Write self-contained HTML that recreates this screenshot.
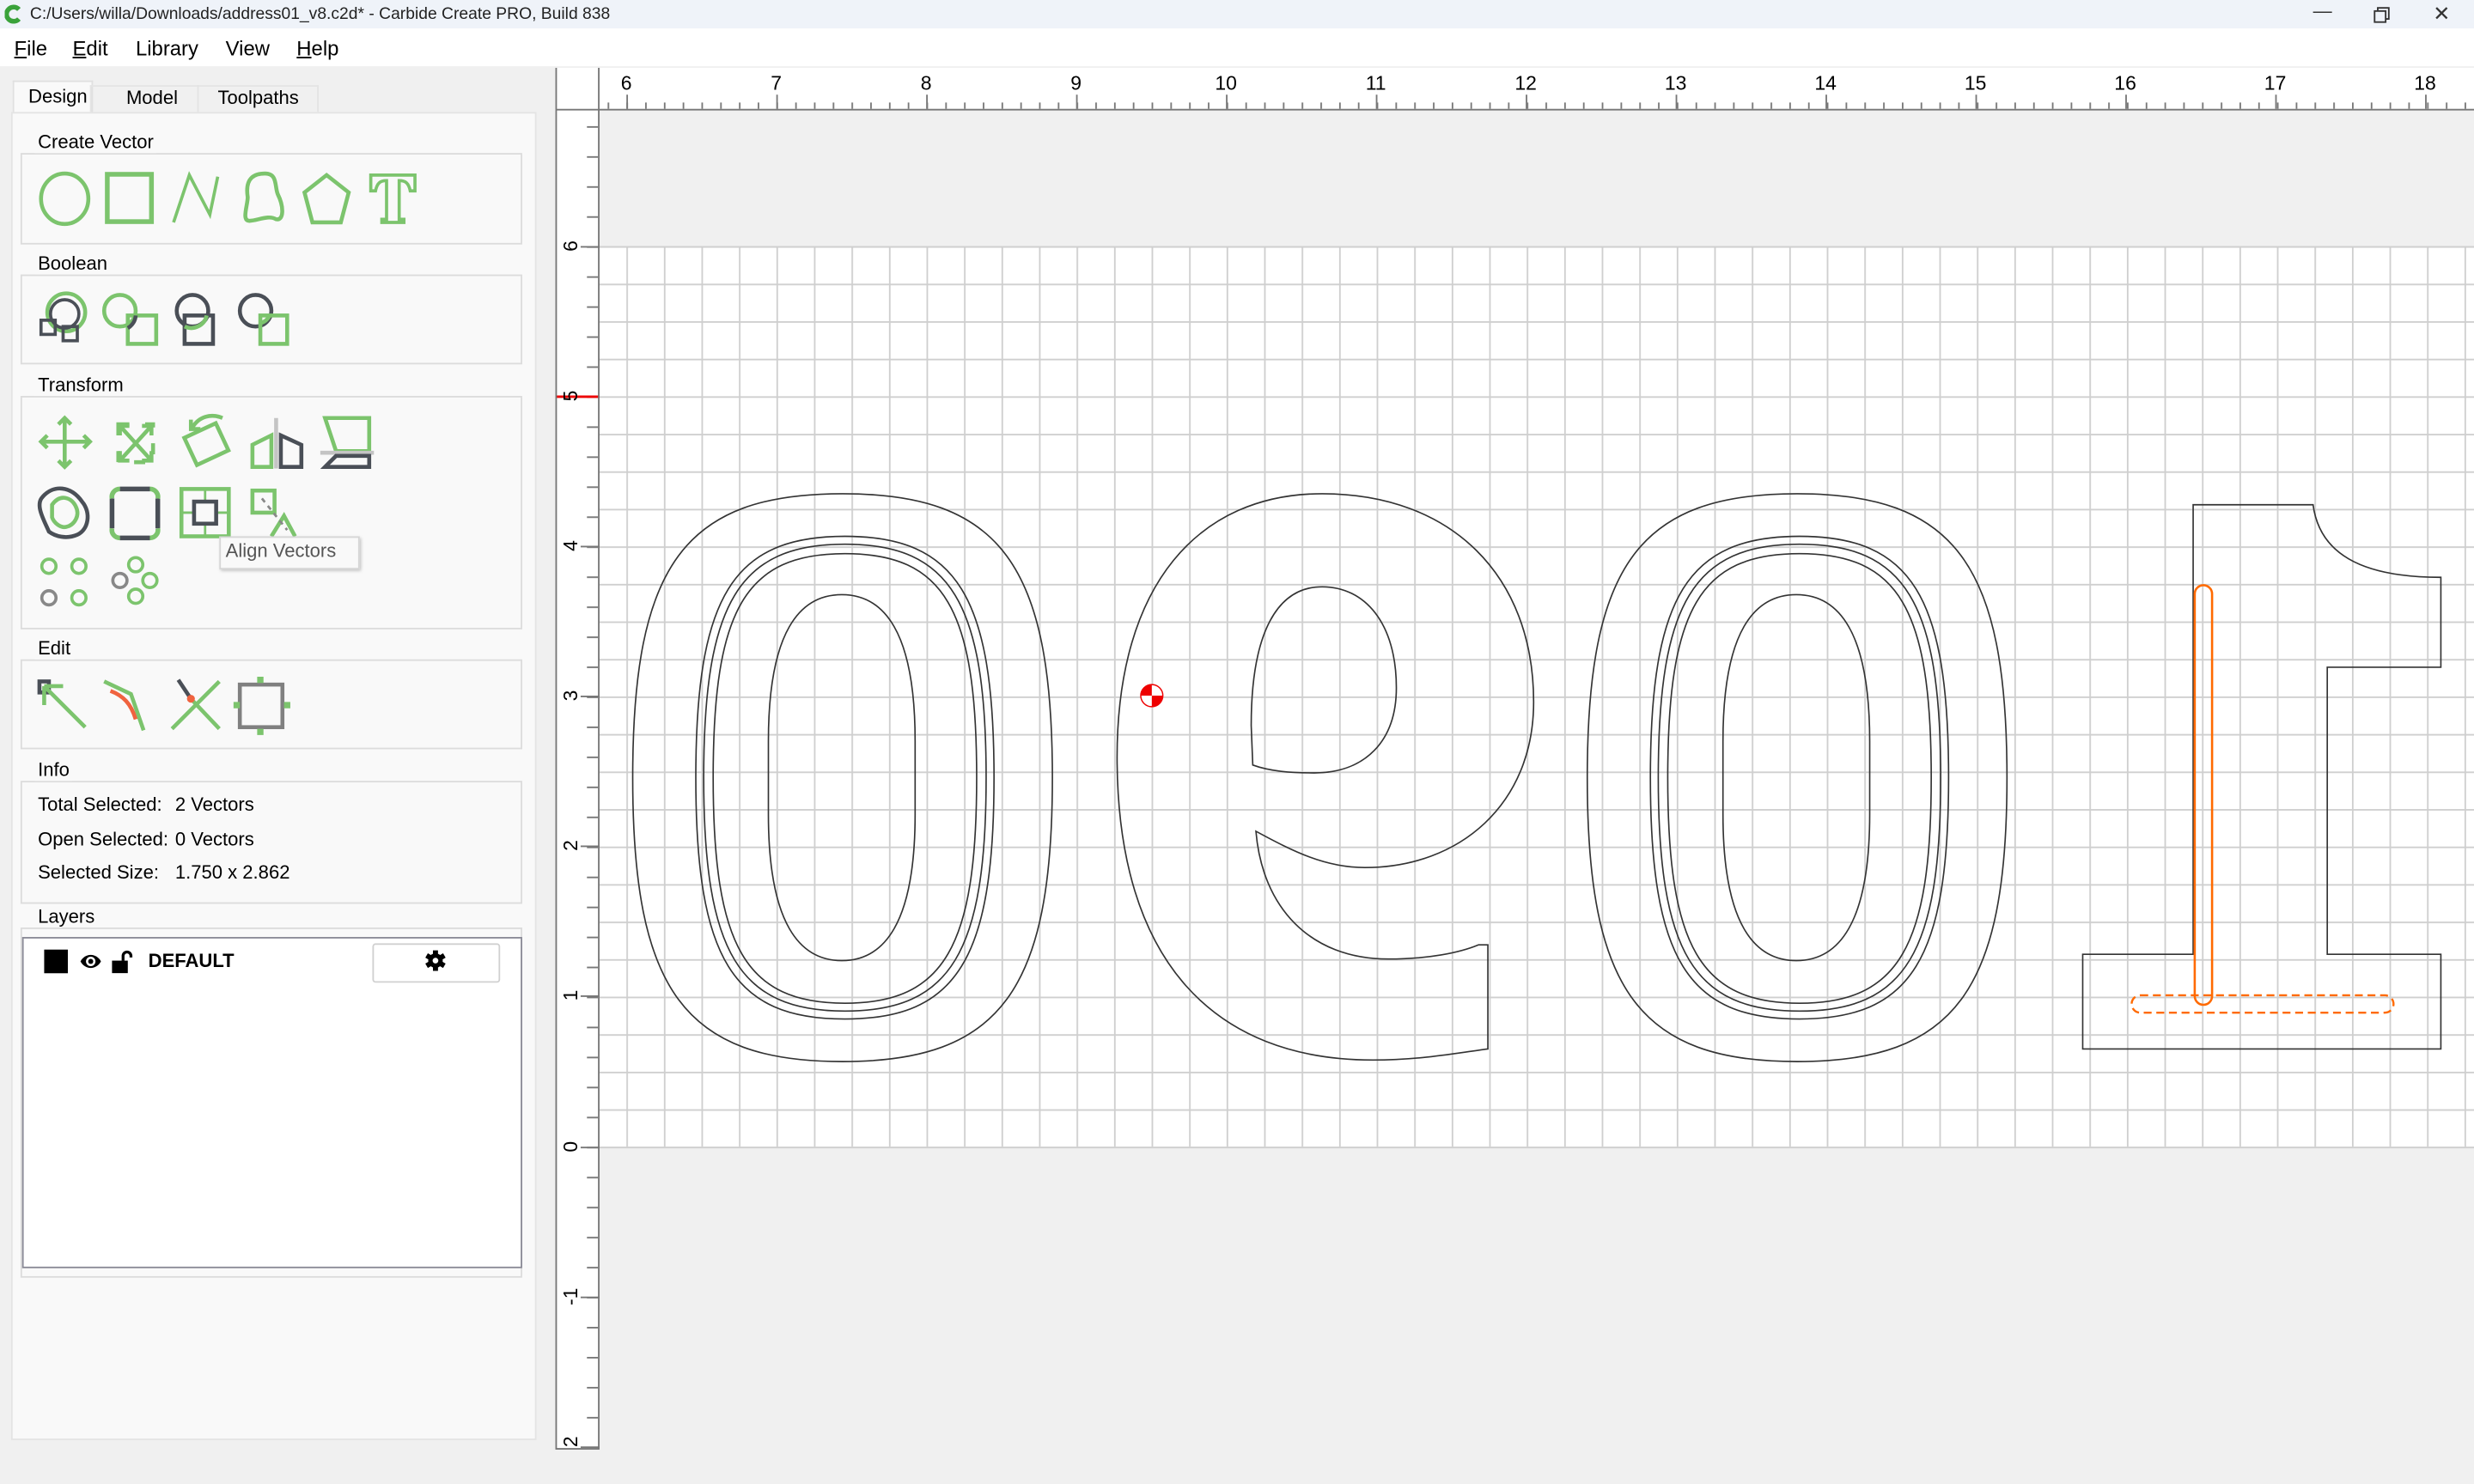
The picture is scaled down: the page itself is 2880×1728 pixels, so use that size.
<!DOCTYPE html>
<html><head><meta charset="utf-8"><style>
html,body{margin:0;padding:0;background:#f0f0f0;overflow:hidden;width:2880px;height:1728px}
#s{position:absolute;left:0;top:0;width:1568px;height:941px;transform:scale(1.836735);transform-origin:0 0;background:#f0f0f0;font-family:"Liberation Sans",sans-serif;color:#000}
.a{position:absolute;white-space:nowrap}
.gb{position:absolute;left:13px;width:316px;border:1px solid #dcdcdc;background:#f9f9f9}
.gt{position:absolute;left:22px;font-size:12px;background:#f9f9f9;padding:0 2px}
.u{text-decoration:underline}
.t{font-size:12px}
</style></head><body><div id="s">
<div class="a" style="left:0;top:0;width:1568px;height:18px;background:#eff3f9"></div>
<svg class="a" style="left:3px;top:3px" width="11" height="12" viewBox="0 0 11 12"><path d="M9 3 A4.5 4.5 0 1 0 9 9" fill="none" stroke="#3aa23a" stroke-width="3"/></svg>
<div class="a" style="left:19px;top:3px;font-size:10.5px;color:#222">C:/Users/willa/Downloads/address01_v8.c2d* - Carbide Create PRO, Build 838</div>
<div class="a" style="left:1466px;top:0px;font-size:12px;color:#333">—</div>
<svg class="a" style="left:1504px;top:4px" width="11" height="11"><rect x="1" y="3" width="7" height="7" fill="none" stroke="#333"/><path d="M3 3V1h7v7H8" fill="none" stroke="#333"/></svg>
<div class="a" style="left:1542px;top:1px;font-size:13px;color:#333">✕</div>
<div class="a" style="left:0;top:18px;width:1568px;height:24px;background:#fff"></div>
<div class="a" style="left:9px;top:23px;font-size:13px"><span class="u">F</span>ile</div>
<div class="a" style="left:46px;top:23px;font-size:13px"><span class="u">E</span>dit</div>
<div class="a" style="left:86px;top:23px;font-size:13px">Library</div>
<div class="a" style="left:143px;top:23px;font-size:13px">View</div>
<div class="a" style="left:188px;top:23px;font-size:13px"><span class="u">H</span>elp</div>
<div class="a" style="left:8px;top:51px;width:49px;height:21px;background:#f9f9f9;border:1px solid #e0e0e0;border-bottom:none"></div>
<div class="a" style="left:57px;top:54px;width:67px;height:16px;border:1px solid #e4e4e4;border-bottom:none"></div>
<div class="a" style="left:125px;top:54px;width:75px;height:16px;border:1px solid #e4e4e4;border-bottom:none"></div>
<div class="a t" style="left:18px;top:54px">Design</div>
<div class="a t" style="left:80px;top:55px">Model</div>
<div class="a t" style="left:138px;top:55px">Toolpaths</div>
<div class="a" style="left:7px;top:71px;width:331px;height:840px;background:#f9f9f9;border:1px solid #e4e4e4"></div>

<div class="gb" style="top:97px;height:56px"></div><div class="gt" style="top:83px">Create Vector</div>
<div class="gb" style="top:174px;height:55px"></div><div class="gt" style="top:160px">Boolean</div>
<div class="gb" style="top:251px;height:146px"></div><div class="gt" style="top:237px">Transform</div>
<div class="gb" style="top:418px;height:55px"></div><div class="gt" style="top:404px">Edit</div>
<div class="gb" style="top:495px;height:76px"></div><div class="gt" style="top:481px">Info</div>
<div class="gb" style="top:588px;height:220px"></div><div class="gt" style="top:574px">Layers</div>

<div class="a t" style="left:24px;top:503px">Total Selected:</div><div class="a t" style="left:111px;top:503px">2 Vectors</div>
<div class="a t" style="left:24px;top:525px">Open Selected:</div><div class="a t" style="left:111px;top:525px">0 Vectors</div>
<div class="a t" style="left:24px;top:546px">Selected Size:</div><div class="a t" style="left:111px;top:546px">1.750 x 2.862</div>

<div class="a" style="left:14px;top:594px;width:315px;height:208px;background:#fff;border:1px solid #8a8a96"></div>
<div class="a" style="left:28px;top:602px;width:15px;height:15px;background:#000"></div>
<svg class="a" style="left:49px;top:602px" width="40" height="15"><path d="M2 7.5C5 2 12 2 15 7.5C12 13 5 13 2 7.5Z" fill="#000"/><circle cx="8.5" cy="7.5" r="3" fill="#fff"/><circle cx="8.5" cy="7.5" r="1.6" fill="#000"/><rect x="22" y="7" width="10" height="8" fill="#000"/><path d="M29 7V4a2.5 2.5 0 0 1 5 0v1" fill="none" stroke="#000" stroke-width="1.8"/></svg>
<div class="a" style="left:94px;top:602px;font-size:12px;font-weight:bold">DEFAULT</div>
<div class="a" style="left:236px;top:598px;width:79px;height:23px;border:1px solid #d0d0d0;border-radius:2px;background:#fff"></div>
<svg class="a" style="left:269px;top:602px" width="14" height="14" viewBox="-7 -7 14 14"><g fill="#000"><circle r="4.6"/><rect x="-1.6" y="-6.5" width="3.2" height="13"/><rect x="-1.6" y="-6.5" width="3.2" height="13" transform="rotate(60)"/><rect x="-1.6" y="-6.5" width="3.2" height="13" transform="rotate(120)"/></g><circle r="1.8" fill="#fff"/></svg>

<svg class="a" style="left:0;top:0" width="340" height="480" fill="none" stroke-width="2.5">
<g stroke="#7cc46d">
<ellipse cx="41" cy="126" rx="15" ry="16"/>
<rect x="68" y="110.5" width="28" height="30" stroke-width="3"/>
<polyline points="110,141 120,111 133,136 138,112" stroke-width="2"/>
<path d="M157,125 C155,112 162,110 168,110 C176,110 174,118 176,123 C180,131 180,140 175,139 C170,136 163,140 158,140 C153,140 157,130 157,125Z"/>
<polygon points="207,111 221,122 216,141 198,141 193,122"/>
<path d="M235,111H263V121H260C259,116 257,114.5 253,114.5V139H256V141H242V139H245V114.5C241,114.5 239,116 238,121H235Z" stroke-width="2"/>
</g>
<circle cx="42" cy="198" r="12" stroke="#7cc46d"/><circle cx="41" cy="199" r="9" stroke="#4a4f57" stroke-width="2"/>
<rect x="26" y="203" width="9" height="9" stroke="#4a4f57" stroke-width="2"/><rect x="40" y="207" width="9" height="9" stroke="#4a4f57" stroke-width="2"/>
<circle cx="76" cy="197" r="10" stroke="#7cc46d"/><rect x="81" y="200" width="18" height="18" stroke="#7cc46d"/><path d="M81,208 A10 10 0 0 0 86,200" stroke="#4a4f57"/>
<circle cx="122" cy="197" r="10" stroke="#4a4f57"/><rect x="117" y="200" width="18" height="18" stroke="#4a4f57"/><path d="M117,207 A10 10 0 0 0 131,200" stroke="#7cc46d"/>
<circle cx="162" cy="197" r="10" stroke="#4a4f57"/><rect x="165" y="200" width="17" height="18" stroke="#7cc46d"/><path d="M165,205 A10 10 0 0 0 171,200" stroke="#7cc46d"/>
<g stroke="#7cc46d">
<path d="M41,265V296M26,280H57M37,269l4-4 4,4M37,292l4,4 4-4M30,276l-4,4 4,4M53,276l4,4-4,4"/>
<rect x="75" y="269" width="22" height="24" stroke-dasharray="7 10" stroke-width="2.5"/>
<path d="M76,270L96,292M96,270L76,292M76,276V270h6M96,276V270h-6M76,286V292h6M96,286V292h-6"/>
<rect x="120" y="272" width="22" height="19" transform="rotate(-25 131 282)"/>
<path d="M122,271 C126,264 134,262 141,265 M121,266v6h6"/>
<path d="M160,282l12,-6V296H160Z"/>
<path d="M206,265H234V286H213Z"/>
</g>
<path d="M175,265V297" stroke="#c4c4c4" stroke-width="2.5"/>
<path d="M178,276l13,6V296H178Z" stroke="#4a4f57"/>
<path d="M203,287H237" stroke="#c4c4c4" stroke-width="2.5"/>
<path d="M213,289H234V296H206Z" stroke="#4a4f57"/>
<path d="M27,315 C34,307 45,308 52,318 C58,325 56,336 49,339 C42,342 35,340 31,337 C28,330 22,320 27,315Z" stroke="#4a4f57"/>
<path d="M33,320 C38,313 45,315 48,321 C51,327 47,333 42,334 C38,335 34,331 33,328Z" stroke="#7cc46d"/>
<path d="M76,310H95M76,341H95" stroke="#4a4f57" stroke-width="3"/>
<path d="M71,316V335M100,316V335" stroke="#4a4f57" stroke-width="3"/>
<path d="M76,310A5,5 0 0 0 71,316M95,310A5,5 0 0 1 100,316M71,335A5,5 0 0 0 76,341M100,335A5,5 0 0 1 95,341" stroke="#7cc46d" stroke-width="3"/>
<rect x="115" y="310" width="30" height="30" stroke="#7cc46d"/><path d="M130,310V340M115,325H145" stroke="#7cc46d" stroke-width="1.5"/>
<rect x="123" y="318" width="14" height="14" fill="#f9f9f9" stroke="#4a4f57"/>
<rect x="160" y="311" width="14" height="14" stroke="#7cc46d"/><path d="M172,340l8-13 7,13" stroke="#7cc46d"/><path d="M166,316l16,20" stroke="#888" stroke-width="1.5" stroke-dasharray="3 3"/>
<g stroke="#7cc46d" stroke-width="2"><circle cx="31" cy="359" r="4.5"/><circle cx="50" cy="359" r="4.5"/><circle cx="50" cy="379" r="4.5"/>
<circle cx="86" cy="358" r="4.5"/><circle cx="95" cy="368" r="4.5"/><circle cx="86" cy="378" r="4.5"/></g>
<circle cx="31" cy="379" r="4.5" stroke="#888" stroke-width="2"/><circle cx="76" cy="368" r="4.5" stroke="#888" stroke-width="2"/>
<rect x="25" y="432" width="6" height="7" stroke="#4a4f57" stroke-width="2.5"/>
<path d="M28,435L54,461M28,435V447M28,435H40" stroke="#7cc46d"/>
<path d="M66,432L83,440L91,463" stroke="#7cc46d"/><path d="M70,438C78,441 83,446 86,456" stroke="#f0633f"/>
<path d="M109,462L139,432M121,443L139,462" stroke="#7cc46d"/><path d="M113,431L121,443" stroke="#4a4f57"/><circle cx="121" cy="443" r="2.5" fill="#f0633f" stroke="none"/>
<rect x="152" y="434" width="27" height="27" stroke="#808080" stroke-width="2.5"/>
<path d="M165,429v4M165,462v4M148,447h4M180,447h4" stroke="#7cc46d" stroke-width="4"/>
</svg>
<div class="a" style="left:139px;top:340px;width:87px;height:19px;background:#f9f9f9;border:1px solid #d6d6d6;box-shadow:1px 1px 2px #bbb"></div>
<div class="a" style="left:143px;top:342px;font-size:12px;color:#555">Align Vectors</div>

<svg class="a" style="left:352px;top:43px" width="1216" height="876" viewBox="352 43 1216 876">
<defs>
<pattern id="g" patternUnits="userSpaceOnUse" x="397" y="727" width="23.775" height="23.79"><path d="M0.5,0V23.79M0,0.5H23.775" stroke="#cfcfcf" stroke-width="1"/></pattern>
<pattern id="tt" patternUnits="userSpaceOnUse" x="397" y="0" width="11.888" height="30"><path d="M0.5,0V30" stroke="#777" stroke-width="1"/></pattern>
<pattern id="tl" patternUnits="userSpaceOnUse" x="0" y="727" width="30" height="19.03"><path d="M0,0.5H30" stroke="#777" stroke-width="1"/></pattern>
</defs>
<rect x="352" y="43" width="1216" height="876" fill="#f0f0f0"/>
<rect x="380" y="156" width="1188" height="571" fill="#fff"/>
<rect x="380" y="156" width="1188" height="571" fill="url(#g)"/>
<path d="M380,727.5H1568M380,156.5H1568" stroke="#cfcfcf"/>
<rect x="352" y="43" width="1216" height="26" fill="#fff"/>
<rect x="352" y="43" width="27" height="875" fill="#fff"/>
<rect x="380" y="65" width="1188" height="4" fill="url(#tt)"/>
<rect x="372" y="70" width="7" height="848" fill="url(#tl)"/>
<g stroke="#777"><path d="M397.5,60V69M492.5,60V69M587.5,60V69M682.5,60V69M777.5,60V69M872.5,60V69M967.5,60V69M1062.5,60V69M1157.5,60V69M1252.5,60V69M1347.5,60V69M1442.5,60V69M1537.5,60V69"/>
<path d="M368,156.5H380M368,251.5H380M368,346.5H380M368,441.5H380M368,536.5H380M368,631.5H380M368,727.5H380M368,822.5H380M368,917.5H380"/></g>
<path d="M352,251.5H380" stroke="#e00" stroke-width="1.5"/>
<path d="M352.5,43V918M379.5,43V918M352,69.5H1568M352,918.5H380" stroke="#777" stroke-width="1"/>
<g font-family="Liberation Sans,sans-serif" font-size="12.5" fill="#000" text-anchor="middle">
<text x="397" y="57">6</text><text x="492" y="57">7</text><text x="587" y="57">8</text><text x="682" y="57">9</text><text x="777" y="57">10</text><text x="872" y="57">11</text><text x="967" y="57">12</text><text x="1062" y="57">13</text><text x="1157" y="57">14</text><text x="1252" y="57">15</text><text x="1347" y="57">16</text><text x="1442" y="57">17</text><text x="1537" y="57">18</text>
<text transform="translate(366,156) rotate(-90)">6</text><text transform="translate(366,251) rotate(-90)">5</text><text transform="translate(366,346) rotate(-90)">4</text><text transform="translate(366,441) rotate(-90)">3</text><text transform="translate(366,536) rotate(-90)">2</text><text transform="translate(366,631) rotate(-90)">1</text><text transform="translate(366,727) rotate(-90)">0</text><text transform="translate(366,822) rotate(-90)">-1</text><text transform="translate(366,914) rotate(-90)">2</text>
</g>
<g fill="none" stroke="#333" stroke-width="0.9">
<g id="zero">
<path d="M534,313 C634,313 667,358 667,493 C667,628 634,673 534,673 C434,673 401,628 401,493 C401,358 434,313 534,313Z"/>
<path d="M535.5,340 C606.5,340 630,378 630,493 C630,608 606.5,646 535.5,646 C464.5,646 441,608 441,493 C441,378 464.5,340 535.5,340Z"/>
<path d="M535.5,345 C602.5,345 625,382 625,493 C625,604 602.5,641 535.5,641 C468.5,641 446,604 446,493 C446,382 468.5,345 535.5,345Z"/>
<path d="M535.5,351 C598.5,351 619,386 619,493 C619,600 598.5,636 535.5,636 C472.5,636 452,600 452,493 C452,386 472.5,351 535.5,351Z"/>
<path d="M533.5,377 C560,377 580,400 580,470 L580,516 C580,586 560,609 533.5,609 C507,609 487,586 487,516 L487,470 C487,400 507,377 533.5,377Z"/>
</g>
<use href="#zero" transform="translate(605,0)"/>
<path d="M838,313 C920,313 972,365 972,445 C972,510 925,550 865,550 C840,550 820,540 796,527 C800,575 830,608 880,608 C905,608 925,604 937,599 L943,599 L943,665 C920,668 900,672 870,672 C770,672 708,610 708,480 C708,370 760,313 838,313Z"/>
<path d="M838,372 C810,372 793,400 793,460 L794,485 C805,489 818,490 833,490 C865,490 885,470 885,436 C885,395 865,372 838,372Z"/>
<path d="M1390,320 H1466 C1470,350 1495,366 1547,366 V423 H1475 V605 H1547 V665 H1320 V605 H1390 Z"/>
</g>
<rect x="1391" y="371" width="11" height="266" rx="5.5" fill="none" stroke="#ff6a00" stroke-width="1.4"/>
<rect x="1351" y="631" width="166" height="11" rx="5.5" fill="none" stroke="#ff6a00" stroke-width="1.3" stroke-dasharray="5 3"/>
<circle cx="730" cy="441" r="7" fill="#fff" stroke="#e00" stroke-width="0.8"/>
<path d="M730,441V434A7,7 0 0 0 723,441Z M730,441V448A7,7 0 0 0 737,441Z" fill="#e00"/>
</svg>
</div></body></html>
